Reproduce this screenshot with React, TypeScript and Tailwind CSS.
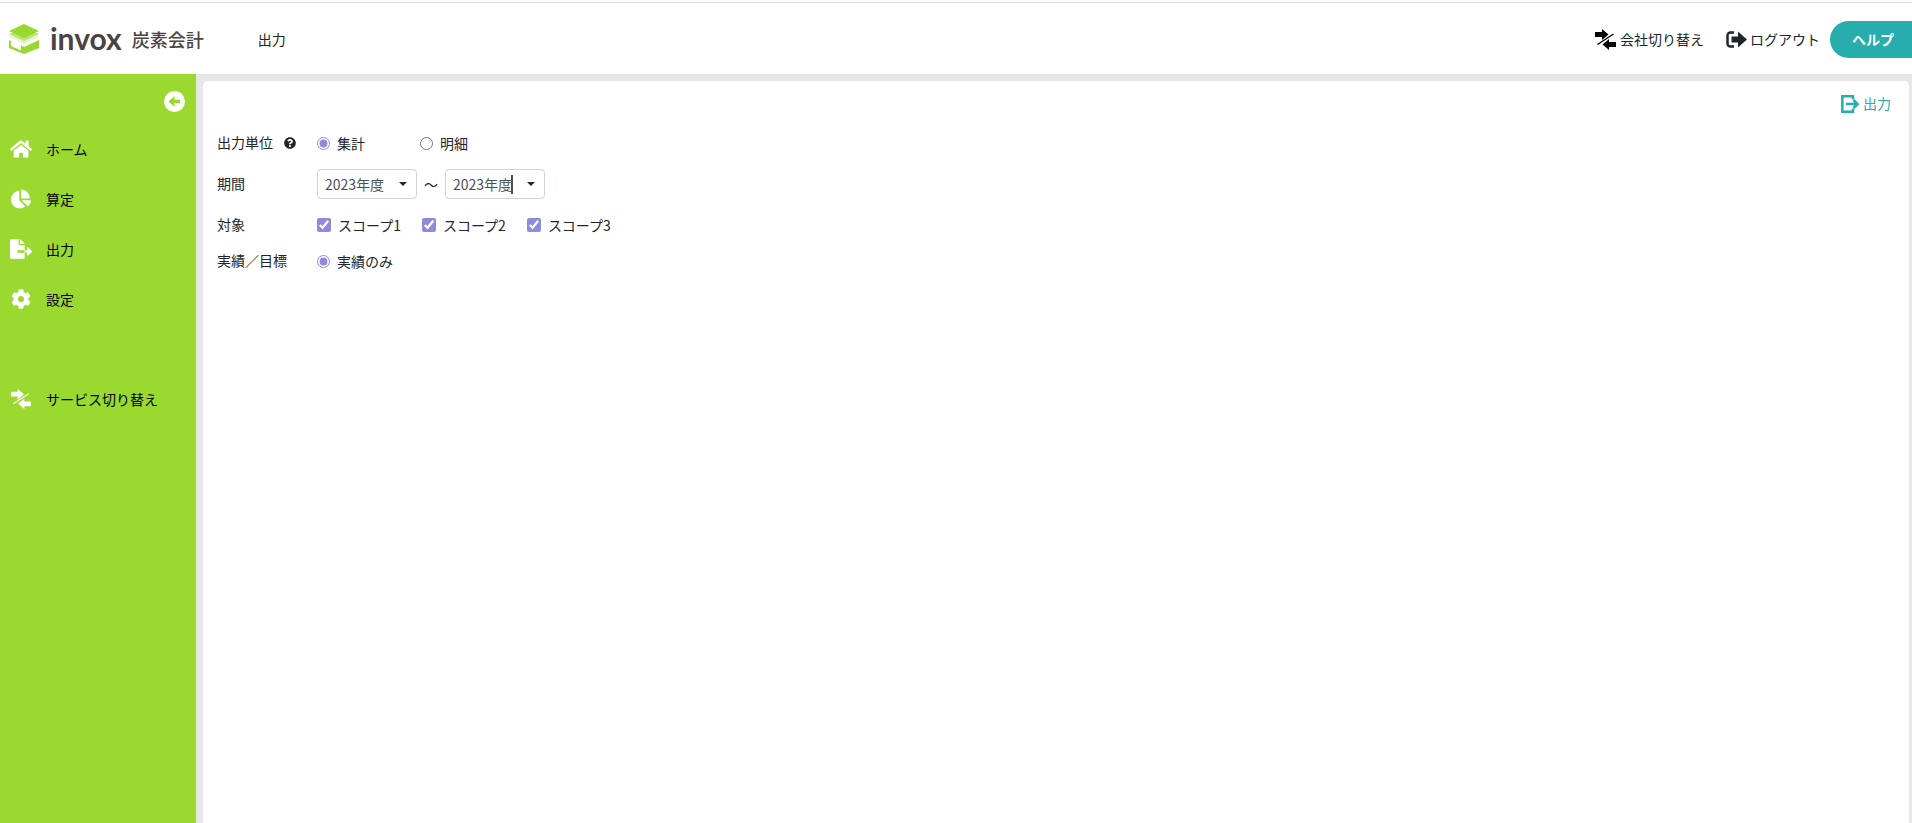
import React, { useState } from 'react';
import { FaChartPie, FaCog, FaFileExport, FaHome, FaQuestionCircle } from 'react-icons/fa';

interface IconProps {
  className?: string;
}

const LogoMark: React.FC<IconProps> = ({ className }) => (
  <svg viewBox="0 0 30 30" className={className} aria-hidden="true">
    <path d="M0 16l2 1v5l10 4.500v-5.500l3 2 15-7v8L15 30 0 24z" fill="#97d92f" />
    <path d="M0 12.500 15 6l15 6.500L15 20z" fill="#e3f5c8" />
    <path d="M0 10 15 3.500 30 10l-15 7z" fill="#b9e673" />
    <path d="M0 7 15 0l15 7-15 7z" fill="#97d92f" />
  </svg>
);

const SwitchIcon: React.FC<IconProps> = ({ className }) => (
  <svg viewBox="0 0 21 21" fill="currentColor" className={className} aria-hidden="true">
    <path d="M0 3h7V0l6.500 5.500L7 11V8H0z" />
    <path d="M21 18h-7v3l-6.500-5.500L14 10v3h7z" />
    <path d="M18.500 5 2.500 15.500" stroke="currentColor" strokeWidth="1.400" />
  </svg>
);

const LogoutIcon: React.FC<IconProps> = ({ className }) => (
  <svg viewBox="0 0 21 17" className={className} aria-hidden="true">
    <path d="M8 1.500H4.500a3 3 0 0 0-3 3v8a3 3 0 0 0 3 3H8" fill="none" stroke="currentColor" strokeWidth="2.500" />
    <path d="M5.500 5.500H12V0.500l9 8-9 8v-5H5.500z" fill="currentColor" />
  </svg>
);

const ExportIcon: React.FC<IconProps> = ({ className }) => (
  <svg viewBox="0 0 18 18" fill="none" stroke="currentColor" strokeWidth="2.500" className={className} aria-hidden="true">
    <path d="M12 4.500V1.300H1.300v15.400H12v-3.200" />
    <path d="M5 9h11M12.500 5l4 4-4 4" />
  </svg>
);

const CollapseIcon: React.FC<IconProps> = ({ className }) => (
  <svg viewBox="0 0 21 21" className={className} aria-hidden="true">
    <circle cx="10.500" cy="10.500" r="10.500" fill="currentColor" />
    <path d="M4.500 10.500 10.500 5v3.700H16v3.600h-5.500V16z" fill="#9ad92f" />
  </svg>
);

interface MenuItem {
  label: string;
  icon: React.ComponentType<IconProps>;
  iconClass: string;
  itemClass?: string;
}

const menuItems: MenuItem[] = [
  { label: 'ホーム', icon: FaHome, iconClass: 'size-[22px]' },
  { label: '算定', icon: FaChartPie, iconClass: 'size-5' },
  { label: '出力', icon: FaFileExport, iconClass: 'size-[22px]' },
  { label: '設定', icon: FaCog, iconClass: 'size-5' },
  { label: 'サービス切り替え', icon: SwitchIcon, iconClass: 'size-5', itemClass: 'mt-[50px]' },
];

const Header: React.FC = () => (
  <header className="h-[74px] bg-white pt-[2px]">
    <div className="flex h-[72px] items-center border-t border-[#dedede] pt-[2px]">
      <a href="#home" className="ml-[9px] flex items-center pb-[2px] text-[#4a4344]">
        <LogoMark className="size-[30px]" />
        <span className="ml-[11px] pb-[2px] font-[Lato] text-3xl leading-8 font-bold">invox</span>
        <span className="ml-[10px] text-lg leading-8 font-medium">炭素会計</span>
      </a>
      <h1 className="ml-[54px] pb-[2px]">出力</h1>
      <nav className="ml-auto flex items-center">
        <a href="#company" className="flex items-center gap-1">
          <SwitchIcon className="size-[21px] text-black" />
          <span className="pb-[2px]">会社切り替え</span>
        </a>
        <a href="#logout" className="ml-[22px] flex items-center gap-[3px]">
          <LogoutIcon className="h-[17px] w-[21px]" />
          <span className="pb-[2px]">ログアウト</span>
        </a>
        <button type="button" className="ml-[10px] h-[37px] rounded-l-full bg-[#27adac] pr-[18px] pb-[2px] pl-[22px] font-bold text-white">
          ヘルプ
        </button>
      </nav>
    </div>
  </header>
);

const Sidebar: React.FC = () => (
  <aside className="w-[196px] shrink-0 bg-[#9ad92f] text-black">
    <div className="flex h-[50px] items-center justify-end pt-1 pr-[11px]">
      <button type="button" aria-label="メニューを閉じる" className="text-white">
        <CollapseIcon className="size-[21px]" />
      </button>
    </div>
    <nav>
      <ul>
        {menuItems.map(({ label, icon: Icon, iconClass, itemClass }) => (
          <li key={label} className={itemClass}>
            <a href="#menu" className="flex h-[50px] items-center">
              <span className="ml-[10px] flex w-[22px] justify-center text-white">
                <Icon className={iconClass} />
              </span>
              <span className="ml-[14px]">{label}</span>
            </a>
          </li>
        ))}
      </ul>
    </nav>
  </aside>
);

interface YearBoxProps {
  label: string;
  focused?: boolean;
}

const YearBox: React.FC<YearBoxProps> = ({ label, focused }) => {
  const [year, setYear] = useState('2023年度');

  return (
    <div className="relative flex h-[30px] w-[100px] items-center rounded border border-[#ced4da] bg-white pl-[7px]">
      <input
        type="text"
        role="combobox"
        aria-label={label}
        aria-expanded={false}
        value={year}
        onChange={(e) => setYear(e.target.value)}
        className="w-16 min-w-0 bg-transparent text-[#495057] outline-none"
      />
      {focused && <span className="absolute top-[5px] left-[65px] h-[19px] w-[2px] bg-[#495057]" />}
      <button type="button" aria-label={`${label}を選択`} className="flex h-full flex-1 items-center justify-center">
        <svg viewBox="0 0 8 4" className="h-1 w-2" fill="#212529" aria-hidden="true">
          <path d="M0 0h8L4 4z" />
        </svg>
      </button>
    </div>
  );
};

interface ChoiceProps {
  type: 'radio' | 'checkbox';
  name: string;
  label: string;
  checked: boolean;
  onChange: () => void;
}

const Choice: React.FC<ChoiceProps> = ({ type, name, label, checked, onChange }) => (
  <label className="flex items-center gap-[7px]">
    <input
      type={type}
      name={name}
      checked={checked}
      onChange={onChange}
      className={type === 'radio' ? 'size-[13px] accent-[#8f8bdc]' : 'size-[14px] accent-[#8f8bdc]'}
    />
    {label}
  </label>
);

const units = ['集計', '明細'];
const scopes = ['スコープ1', 'スコープ2', 'スコープ3'];

const OutputForm: React.FC = () => {
  const [unit, setUnit] = useState('集計');
  const [selected, setSelected] = useState<string[]>(scopes);

  const toggleScope = (scope: string) => {
    setSelected((prev) => (prev.includes(scope) ? prev.filter((s) => s !== scope) : [...prev, scope]));
  };

  return (
    <form className="mt-[18px] grid grid-cols-[100px_1fr] gap-y-4 pl-[14px]">
      <div className="flex h-[18px] items-center">
        出力単位
        <button type="button" aria-label="出力単位について" className="ml-[11px] pt-[2px]">
          <FaQuestionCircle className="size-3" />
        </button>
      </div>
      <div className="flex h-5 items-center gap-[55px]">
        {units.map((u) => (
          <Choice key={u} type="radio" name="unit" label={u} checked={unit === u} onChange={() => setUnit(u)} />
        ))}
      </div>

      <div className="flex h-7 items-center">期間</div>
      <div className="flex items-center">
        <YearBox label="開始年度" />
        <span className="w-7 text-center">～</span>
        <YearBox label="終了年度" focused />
      </div>

      <div className="flex h-[18px] items-center">対象</div>
      <div className="flex h-5 items-center gap-[21px]">
        {scopes.map((scope) => (
          <Choice
            key={scope}
            type="checkbox"
            name="scope"
            label={scope}
            checked={selected.includes(scope)}
            onChange={() => toggleScope(scope)}
          />
        ))}
      </div>

      <div className="flex h-[18px] items-center">実績／目標</div>
      <div className="flex h-5 items-center">
        <Choice type="radio" name="result" label="実績のみ" checked onChange={() => {}} />
      </div>
    </form>
  );
};

const App: React.FC = () => {
  return (
    <div className="flex min-h-screen flex-col bg-[#e7e7e7] font-['Noto_Sans_CJK_JP',sans-serif] text-sm text-[#212529]">
      <Header />
      <div className="flex flex-1">
        <Sidebar />
        <main className="mt-[7px] mr-[3px] ml-[7px] flex-1 rounded-t-[5px] bg-white pt-3">
          <div className="flex justify-end pr-[18px]">
            <button type="button" className="flex h-[22px] items-center gap-1 text-[#27adac]">
              <ExportIcon className="size-[18px]" />
              <span className="pb-[2px]">出力</span>
            </button>
          </div>
          <OutputForm />
        </main>
      </div>
    </div>
  );
};

export default App;
